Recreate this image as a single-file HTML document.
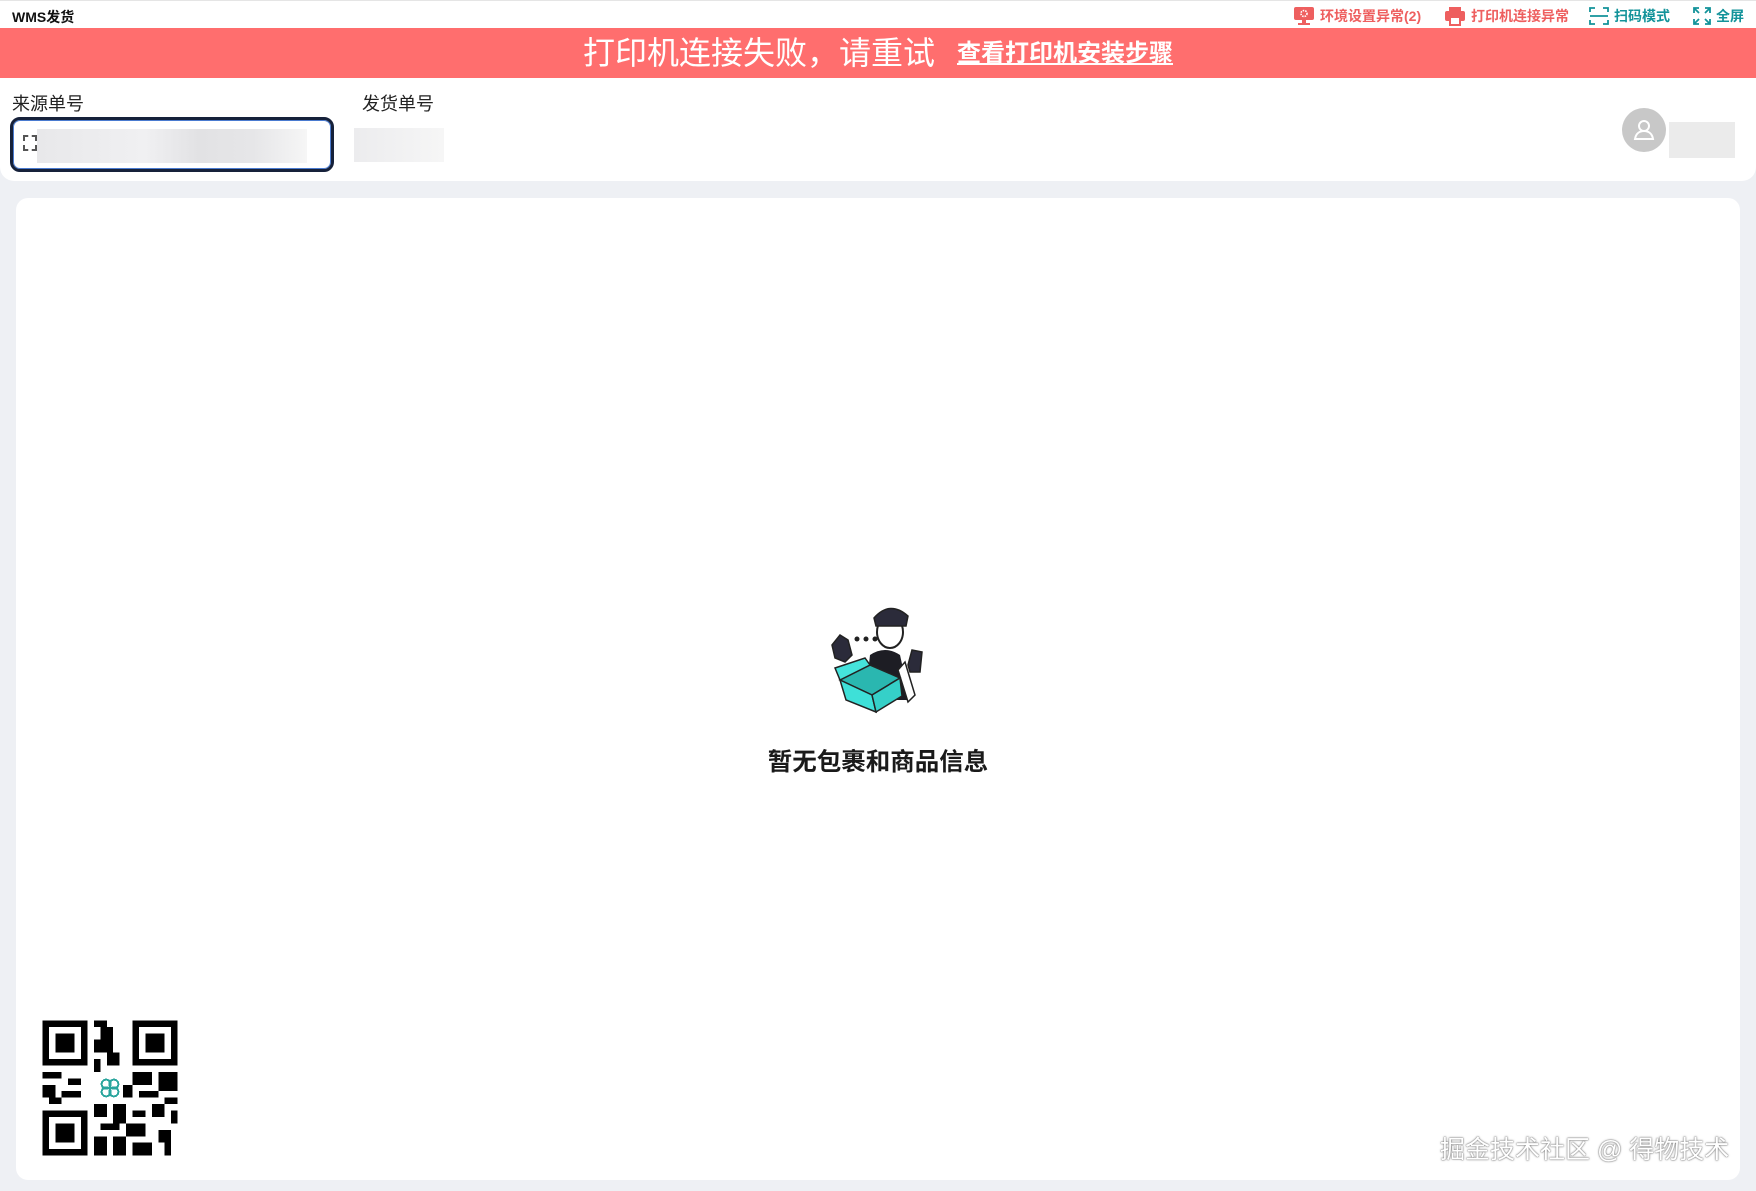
<!DOCTYPE html>
<html><head><meta charset="utf-8"><style>
*{margin:0;padding:0;box-sizing:border-box}
body{width:1756px;height:1191px;background:#eef0f4;font-family:"Liberation Sans","Noto Sans CJK SC",sans-serif;position:relative;overflow:hidden}
.top{position:absolute;left:0;top:0;width:1756px;height:28px;background:#fff;border-top:1px solid #e5e5e5}
.top .t{position:absolute;left:12px;top:6px;font-size:14px;font-weight:bold;color:#111}
.ti{position:absolute;top:5px;font-size:14px;font-weight:bold;display:flex;align-items:center;gap:5px}
.red{color:#ee5f5f}.teal{color:#13939a}
.banner{position:absolute;left:0;top:28px;width:1756px;height:50px;background:#ff6e6e;color:#fff;text-align:center;font-size:32px;line-height:50px;white-space:nowrap}
.banner a{color:#fff;font-size:24px;font-weight:bold;text-decoration:underline;margin-left:22px;vertical-align:3px}
.head{position:absolute;left:0;top:78px;width:1756px;height:103px;background:#fff;border-radius:0 0 14px 14px}
.lbl{position:absolute;top:12px;font-size:18px;color:#222}
.inp{position:absolute;left:10px;top:39px;width:324px;height:55px;border:3px solid #16213a;border-radius:10px;box-shadow:inset 0 0 0 1px #4a7bd0}
.card{position:absolute;left:16px;top:198px;width:1724px;height:982px;background:#fff;border-radius:12px}
.empty{position:absolute;left:0;width:1756px;top:743px;text-align:center;font-size:24.5px;font-weight:bold;color:#1a1a1a}
.wm{position:absolute;left:1440px;top:1130px;font-size:25px;color:#fff;text-shadow:0 0 2px #777,0 0 1px #555}
</style></head><body>
<div class="top"><div class="t">WMS发货</div>
<div class="ti red" style="left:1293px"><svg width="22" height="20" viewBox="0 0 22 20"><rect x="1" y="1" width="20" height="13" rx="2" fill="#ee5f5f"/><rect x="9" y="14" width="4" height="3" fill="#ee5f5f"/><rect x="5" y="17" width="12" height="2" fill="#ee5f5f"/><circle cx="11" cy="7.5" r="3" fill="none" stroke="#fff" stroke-width="1.6" stroke-dasharray="1.5 1"/></svg>环境设置异常(2)</div>
<div class="ti red" style="left:1444px"><svg width="22" height="20" viewBox="0 0 22 20"><rect x="5" y="1" width="12" height="4" fill="#ee5f5f"/><rect x="1" y="5" width="20" height="10" rx="2" fill="#ee5f5f"/><rect x="6" y="11" width="10" height="8" fill="#fff" stroke="#ee5f5f" stroke-width="2"/></svg>打印机连接异常</div>
<div class="ti teal" style="left:1589px"><svg width="20" height="20" viewBox="0 0 20 20" fill="none" stroke="#13939a" stroke-width="1.8"><path d="M1 6V2h5M14 2h5v4M19 14v4h-5M6 18H1v-4M1 10h18"/></svg>扫码模式</div>
<div class="ti teal" style="left:1693px"><svg width="18" height="18" viewBox="0 0 18 18" fill="none" stroke="#13939a" stroke-width="1.8"><path d="M1 6V1h5M12 1h5v5M17 12v5h-5M6 17H1v-5M1 1l5 5M17 1l-5 5M17 17l-5-5M1 17l5-5"/></svg>全屏</div>
</div>
<div class="banner">打印机连接失败，请重试<a>查看打印机安装步骤</a></div>
<div class="head">
<div class="lbl" style="left:12px">来源单号</div>
<div class="lbl" style="left:362px">发货单号</div>
<div class="inp"><div style="position:absolute;left:10px;top:15px;width:14px;height:16px;border:2px dashed #555;border-width:2px 2px"></div><div style="position:absolute;left:24px;top:9px;width:270px;height:34px;background:linear-gradient(90deg,#e8e8ea,#f0f0f2 40%,#e2e2e4 60%,#e6e6e8 80%,#f6f6f6)"></div></div>
<div style="position:absolute;left:354px;top:50px;width:90px;height:34px;background:linear-gradient(90deg,#ececee,#f6f6f6)"></div>
<div style="position:absolute;left:1622px;top:30px;width:44px;height:44px;border-radius:50%;background:#c8c8c8"><svg width="44" height="44" viewBox="0 0 44 44" fill="none" stroke="#fff" stroke-width="2"><circle cx="22" cy="18" r="5"/><path d="M13 31c1-6 5-8 9-8s8 2 9 8z"/></svg></div>
<div style="position:absolute;left:1669px;top:44px;width:66px;height:36px;background:#ebebeb"></div>
</div>
<div class="card"></div>
<svg style="position:absolute;left:810px;top:600px" width="140" height="120" viewBox="0 0 140 120">
<circle cx="47" cy="39" r="2.5" fill="#222"/><circle cx="56" cy="39" r="2.5" fill="#222"/><circle cx="65" cy="39" r="2.5" fill="#222"/>
<path d="M60 55 Q75 45 90 55 L100 100 L55 100Z" fill="#1d1d24"/>
<path d="M52 60 L35 70 L40 80 L55 70Z" fill="#fff" stroke="#222" stroke-width="1.5"/>
<path d="M95 62 L105 95 L98 102 L88 70Z" fill="#fff" stroke="#222" stroke-width="1.5"/>
<ellipse cx="80" cy="32" rx="13" ry="16" fill="#fff" stroke="#222" stroke-width="2"/>
<path d="M64 18 Q80 0 98 16 L96 26 L66 26Z" fill="#2b2b3a" stroke="#222" stroke-width="1.5"/>
<path d="M22 45 L30 35 L38 40 L42 55 L35 62 L25 58Z" fill="#2b2b3a" stroke="#222" stroke-width="1.5"/>
<path d="M98 65 L102 50 L112 52 L110 72 L100 72Z" fill="#2b2b3a" stroke="#222" stroke-width="1.5"/>
<path d="M30 80 L60 65 L90 78 L62 95Z" fill="#2ab7b0" stroke="#222" stroke-width="1.5"/>
<path d="M30 80 L62 95 L66 112 L36 100Z" fill="#3ee0d8" stroke="#222" stroke-width="1.5"/>
<path d="M62 95 L90 78 L92 96 L66 112Z" fill="#35d0c8" stroke="#222" stroke-width="1.5"/>
<path d="M30 80 L25 68 L55 58 L60 65Z" fill="#45e3db" stroke="#222" stroke-width="1.5"/>
</svg>
<div class="empty">暂无包裹和商品信息</div>
<svg style="position:absolute;left:36px;top:1012px;background:#fff;border-radius:6px" width="148" height="152" viewBox="-1 -1 23 23" shape-rendering="crispEdges">
<g fill="#000">
<path d="M0 0h7v7h-7zM1 1v5h5v-5zM2 2h3v3h-3z" fill-rule="evenodd"/>
<path d="M14 0h7v7h-7zM15 1v5h5v-5zM16 2h3v3h-3z" fill-rule="evenodd"/>
<path d="M0 14h7v7h-7zM1 15v5h5v-5zM2 16h3v3h-3z" fill-rule="evenodd"/>
<rect x="8" y="0" width="2" height="1"/><rect x="9" y="1" width="2" height="2"/><rect x="8" y="3" width="3" height="2"/><rect x="10" y="5" width="2" height="2"/><rect x="8" y="6" width="1" height="2"/>
<rect x="0" y="8" width="3" height="1"/><rect x="4" y="9" width="2" height="1"/><rect x="0" y="10" width="2" height="2"/><rect x="3" y="11" width="3" height="1"/><rect x="1" y="12" width="2" height="1"/>
<rect x="14" y="8" width="3" height="2"/><rect x="18" y="8" width="3" height="3"/><rect x="15" y="11" width="3" height="1"/><rect x="19" y="12" width="2" height="1"/><rect x="12" y="10" width="2" height="2"/>
<rect x="8" y="13" width="2" height="2"/><rect x="11" y="13" width="2" height="3"/><rect x="14" y="14" width="2" height="1"/><rect x="17" y="13" width="2" height="2"/><rect x="20" y="14" width="1" height="2"/>
<rect x="9" y="16" width="3" height="1"/><rect x="13" y="16" width="3" height="2"/><rect x="8" y="18" width="2" height="3"/><rect x="11" y="18" width="2" height="2"/><rect x="14" y="19" width="3" height="2"/><rect x="18" y="17" width="2" height="2"/><rect x="19" y="19" width="1" height="2"/><rect x="11" y="20" width="2" height="1"/>
</g>
<rect x="8.5" y="8.5" width="4" height="4" fill="#fff"/>
<g fill="none" stroke="#2aa59d" stroke-width="0.3"><circle cx="9.9" cy="9.9" r="0.7"/><circle cx="11.1" cy="9.9" r="0.7"/><circle cx="9.9" cy="11.1" r="0.7"/><circle cx="11.1" cy="11.1" r="0.7"/></g>
</svg>
<div class="wm">掘金技术社区 @ 得物技术</div>
</body></html>
